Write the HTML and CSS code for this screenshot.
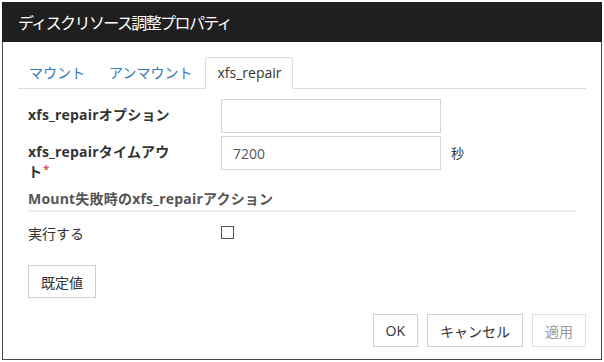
FILE: index.html
```html
<!DOCTYPE html>
<html lang="ja">
<head>
<meta charset="utf-8">
<title>ディスクリソース調整プロパティ</title>
<link rel="stylesheet" href="styles.css">
</head>
<body>
<div class="window">
  <div class="titlebar">ディスクリソース調整プロパティ</div>
  <div class="content">
    <ul class="tabs">
      <li class="tab"><a href="#">マウント</a></li>
      <li class="tab"><a href="#">アンマウント</a></li>
      <li class="tab active"><a href="#">xfs_repair</a></li>
    </ul>
    <div class="form">
      <div class="row">
        <label class="label">xfs_repairオプション</label>
        <input class="input" type="text" value="">
      </div>
      <div class="row">
        <label class="label">xfs_repairタイムアウ<span class="nowrap">ト<span class="req">*</span></span></label>
        <input class="input" type="text" value="7200">
        <span class="unit">秒</span>
      </div>
      <div class="section">Mount失敗時のxfs_repairアクション</div>
      <div class="row check-row">
        <span class="plain-label">実行する</span>
        <input class="checkbox" type="checkbox">
      </div>
      <button class="btn default-btn">既定値</button>
    </div>
    <div class="footer">
      <button class="btn">OK</button>
      <button class="btn">キャンセル</button>
      <button class="btn disabled" disabled>適用</button>
    </div>
  </div>
</div>
</body>
</html>
```
FILE: styles.css
```css
* { box-sizing: border-box; }
html, body { margin: 0; padding: 0; background: #fff; }
body {
  font-family: "Open Sans", "Noto Sans CJK JP", sans-serif;
  font-size: 14px;
  color: #333;
}
.window {
  width: 600px;
  height: 358px;
  margin: 2px 0 0 2px;
  border: 1px solid #4a4a4a;
  border-top: none;
  background: #fff;
}
.titlebar {
  height: 40px;
  margin: 0 -1px;
  background: #1f1f1f;
  color: #fff;
  font-size: 16px;
  letter-spacing: -1.6px;
  line-height: 40px;
  padding-left: 16px;
  font-family: "Noto Sans CJK JP", sans-serif;
}
.content {
  padding: 15px 15px 0 15px;
}
.tabs {
  list-style: none;
  margin: 0;
  padding: 0;
  display: flex;
  border-bottom: 1px solid #dcdcdc;
  height: 32px;
}
.tab {
  margin-right: 2px;
}
.tab a {
  display: block;
  height: 32px;
  line-height: 30px;
  padding: 0 10px;
  color: #337ab7;
  text-decoration: none;
  border: 1px solid transparent;
  border-radius: 3px 3px 0 0;
  font-size: 14px;
}
.tab.active a {
  color: #333;
  background: #fff;
  border-color: #dcdcdc;
  border-bottom-color: #fff;
  padding: 0 11px;
}
.form {
  padding: 10px 10px 0 10px;
}
.row {
  display: flex;
  align-items: flex-start;
  margin-bottom: 3px;
}
.label {
  width: 193px;
  padding: 6px 44px 0 0;
  font-weight: bold;
  line-height: 20px;
  font-size: 14px;
  color: #333;
  letter-spacing: 0.2px;
}
.nowrap {
  white-space: nowrap;
}
.req {
  color: #d9534f;
  font-size: 11px;
  line-height: 14px;
  vertical-align: top;
  margin-left: 1px;
}
.input {
  width: 220px;
  height: 34px;
  border: 1px solid #d6d6d6;
  padding: 0 11px;
  font-family: inherit;
  font-size: 14px;
  color: #555;
  outline: none;
  border-radius: 0;
}
.unit {
  margin-left: 10px;
  line-height: 34px;
  font-size: 13px;
  color: #333;
}
.section {
  margin-top: 8px;
  font-weight: bold;
  color: #555;
  line-height: 18px;
  padding-bottom: 2px;
  border-bottom: 2px solid #ececec;
  letter-spacing: 0.2px;
}
.check-row {
  margin-top: 13px;
  margin-bottom: 0;
}
.plain-label {
  width: 193px;
  line-height: 18px;
}
.checkbox {
  appearance: none;
  -webkit-appearance: none;
  width: 13px;
  height: 13px;
  margin: 1px 0 0 0;
  border: 1px solid #555;
  background: #fff;
}
.btn {
  height: 33px;
  padding: 0 12px;
  background: #fff;
  border: 1px solid #d0d0d0;
  font-family: inherit;
  font-size: 14px;
  color: #333;
  border-radius: 0;
}
.default-btn {
  margin-top: 22px;
  width: 68px;
}
.footer {
  display: flex;
  justify-content: flex-end;
  gap: 9px;
  margin-top: 16px;
}
.btn.disabled {
  color: #999;
  border-color: #e0e0e0;
}
```
